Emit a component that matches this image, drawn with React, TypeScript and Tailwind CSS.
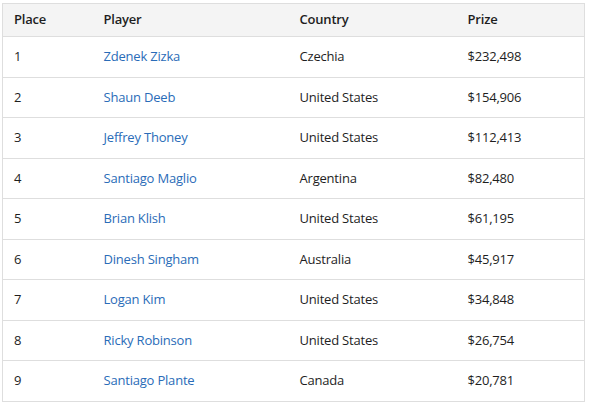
const rows = [
  { place: 1, player: 'Zdenek Zizka', country: 'Czechia', prize: '$232,498' },
  { place: 2, player: 'Shaun Deeb', country: 'United States', prize: '$154,906' },
  { place: 3, player: 'Jeffrey Thoney', country: 'United States', prize: '$112,413' },
  { place: 4, player: 'Santiago Maglio', country: 'Argentina', prize: '$82,480' },
  { place: 5, player: 'Brian Klish', country: 'United States', prize: '$61,195' },
  { place: 6, player: 'Dinesh Singham', country: 'Australia', prize: '$45,917' },
  { place: 7, player: 'Logan Kim', country: 'United States', prize: '$34,848' },
  { place: 8, player: 'Ricky Robinson', country: 'United States', prize: '$26,754' },
  { place: 9, player: 'Santiago Plante', country: 'Canada', prize: '$20,781' },
]

export default function App() {
  return (
    <div className="w-[593px] h-[404px] bg-white pt-[3px] pl-[2px] font-['Open_Sans',sans-serif] text-[13px] text-[#1e1e1e]">
      <table className="w-[582px] border-collapse table-fixed">
        <colgroup>
          <col className="w-[90px]" />
          <col className="w-[196px]" />
          <col className="w-[168px]" />
          <col className="w-[128px]" />
        </colgroup>
        <thead>
          <tr className="h-[33px] bg-[#f4f4f4] border border-[#dedede]">
            <th className="text-left font-semibold pl-[11px] pr-3 tracking-[-0.2px]">Place</th>
            <th className="text-left font-semibold pl-[11px] pr-3 tracking-[-0.2px]">Player</th>
            <th className="text-left font-semibold pl-[11px] pr-3 tracking-[-0.2px]">Country</th>
            <th className="text-left font-semibold pl-[11px] pr-3 tracking-[-0.2px]">Prize</th>
          </tr>
        </thead>
        <tbody>
          {rows.map((r) => (
            <tr key={r.place} className="h-[40.5px] border border-[#dedede]">
              <td className="pl-[11px] pr-3 tracking-[-0.2px]">{r.place}</td>
              <td className="pl-[11px] pr-3 tracking-[-0.2px]">
                <a href="#" className="text-[#2a6cb8]">{r.player}</a>
              </td>
              <td className="pl-[11px] pr-3 tracking-[-0.2px]">{r.country}</td>
              <td className="pl-[11px] pr-3 tracking-[-0.2px]">{r.prize}</td>
            </tr>
          ))}
        </tbody>
      </table>
    </div>
  )
}
